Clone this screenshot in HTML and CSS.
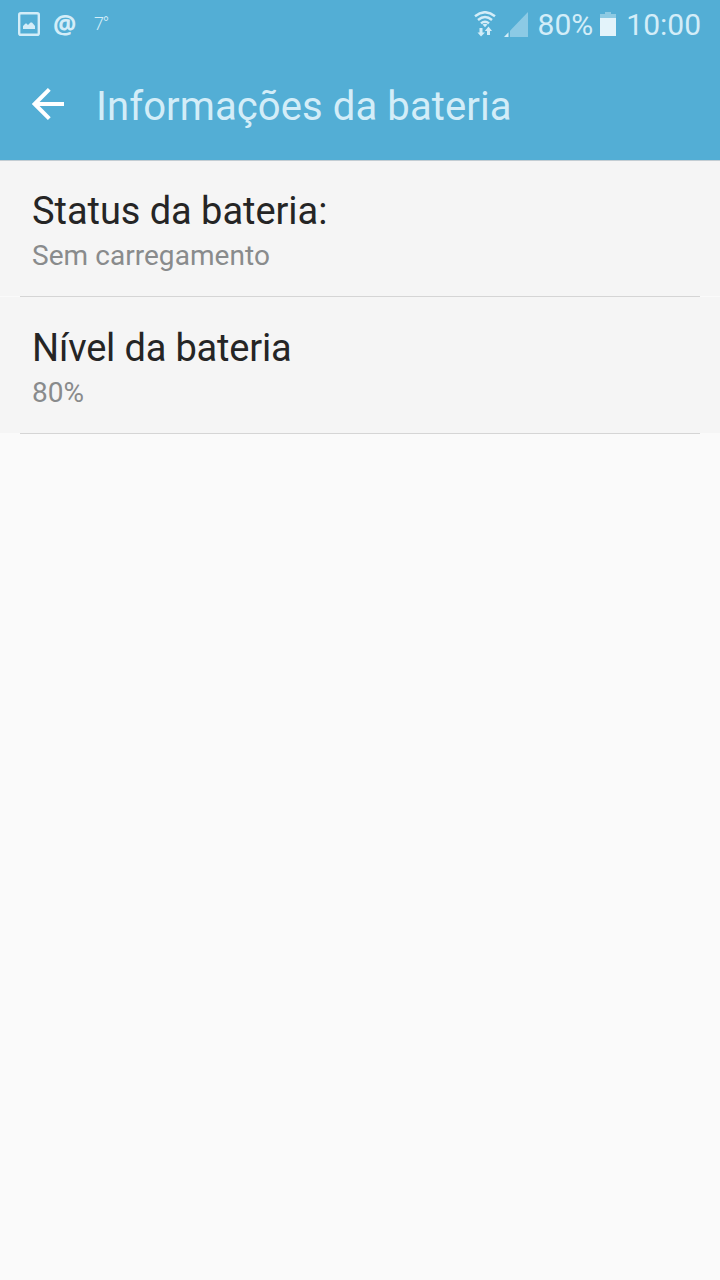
FILE: index.html
```html
<!DOCTYPE html>
<html lang="pt-BR">

<head>
  <meta charset="UTF-8">
  <meta name="viewport" content="width=device-width, initial-scale=1.0">
  <title>Informações da bateria</title>
  <link rel="stylesheet" href="styles.css">
</head>

<body>
  <header class="header">
    <div class="status">
      <div class="status-left">
        <svg class="icon-picture" width="22" height="24" viewBox="0 0 22 24">
          <rect x="1.2" y="1.2" width="19.6" height="21.6" rx="1.6" fill="none" stroke="currentColor" stroke-width="2.4" />
          <path fill="currentColor" d="M5 17v-3l2.500-2.500h1l1.500 1.500 2.500-2.500h1.500l3 3.500V17z" />
        </svg>
        <span class="at">@</span>
        <span class="temp">7°</span>
      </div>
      <div class="status-right">
        <svg class="icon-wifi" width="22" height="26" viewBox="0 0 22 26">
          <g fill="none" stroke="currentColor" stroke-width="2.4">
            <path d="M1 5.200Q11-2.800 21 5.200" />
            <path d="M4 9Q11 3.200 18 9" />
            <path d="M7 12.400Q11 9 15 12.400" />
          </g>
          <path fill="currentColor" d="M8.500 13.500q2.500-1.600 5 0L11 16.300z" />
          <path fill="currentColor" d="M5.500 17h3v4.500H11L7 25.500 3.500 21.500h2zM13 24V20h-2.200l3.700-4.500 3.500 4.500h-2v4z" />
        </svg>
        <svg class="icon-signal" width="24" height="25" viewBox="0 0 24 25">
          <path fill="currentColor" opacity=".45" d="M24 0v25H6V18.700z" />
          <path fill="currentColor" d="M4.500 20.300V25H0z" />
        </svg>
        <span class="percent">80%</span>
        <svg class="icon-battery" width="16" height="24" viewBox="0 0 16 24">
          <path fill="#8dcae3" d="M5 0h6v2h5v4H0V2h5z" />
          <path fill="#e3f3fa" d="M0 6h16v18H0z" />
        </svg>
        <span class="clock">10:00</span>
      </div>
    </div>
    <div class="toolbar">
      <svg class="icon-back" width="32" height="32" viewBox="0 0 32 32">
        <path fill="none" stroke="currentColor" stroke-width="4" d="M32 16H3M17.300 1.400L2.700 16l14.600 14.600" />
      </svg>
      <h1 class="title">Informações da bateria</h1>
    </div>
  </header>
  <ul class="list">
    <li class="item">
      <p class="name">Status da bateria:</p>
      <p class="value">Sem carregamento</p>
    </li>
    <li class="divider"></li>
    <li class="item">
      <p class="name name-level">Nível da bateria</p>
      <p class="value">80%</p>
    </li>
    <li class="divider"></li>
  </ul>
</body>

</html>
```

FILE: styles.css
```css
* {
  margin: 0;
  padding: 0;
  box-sizing: border-box;
}

body {
  min-height: 1280px;
  background-color: #fafafa;
  font-family: Roboto, sans-serif;
}

svg {
  display: block;
  flex-shrink: 0;
}

.header {
  height: 161px;
  background-color: #53aed5;
  border-bottom: 1px solid #c3cdd3;
}

.status {
  display: flex;
  justify-content: space-between;
  height: 48px;
  padding: 0 19px 0 18px;
  color: #d3edf8;
}

.status-left,
.status-right {
  display: flex;
  align-items: center;
}

.at {
  width: 24px;
  margin-left: 13px;
  font-family: "Noto Sans", sans-serif;
  font-size: 26px;
  font-weight: 700;
  line-height: 44px;
}

.temp {
  margin-left: 17px;
  font-size: 18px;
  font-weight: 300;
  letter-spacing: -1.5px;
  line-height: 48px;
}

.icon-signal {
  margin-left: 8px;
}

.percent {
  margin-left: 10px;
  padding-top: 2px;
  font-size: 30px;
  line-height: 50px;
}

.icon-battery {
  margin-left: 7px;
}

.clock {
  margin-left: 10px;
  padding-top: 2px;
  font-size: 30px;
  line-height: 50px;
}

.toolbar {
  display: flex;
  align-items: center;
  height: 112px;
  padding-left: 32px;
}

.icon-back {
  color: #fff;
}

.title {
  margin-left: 32px;
  padding-top: 6px;
  color: #d3edf8;
  font-size: 40px;
  font-weight: 400;
  letter-spacing: 0.1px;
  line-height: 48px;
}

.list {
  list-style: none;
}

.item {
  height: 136px;
  padding: 27px 32px 0;
  background-color: #f5f5f5;
}

.item:first-child {
  height: 135px;
  padding-top: 26px;
}

.name {
  color: #252525;
  font-size: 38px;
  letter-spacing: -0.05px;
  line-height: 48px;
}

.name-level {
  letter-spacing: -0.18px;
}

.value {
  padding-top: 1px;
  color: #898b8c;
  font-size: 28px;
  letter-spacing: 0.05px;
  line-height: 40px;
}

.divider {
  height: 1px;
  margin: 0 20px;
  background-color: #d5d5d5;
}
```
